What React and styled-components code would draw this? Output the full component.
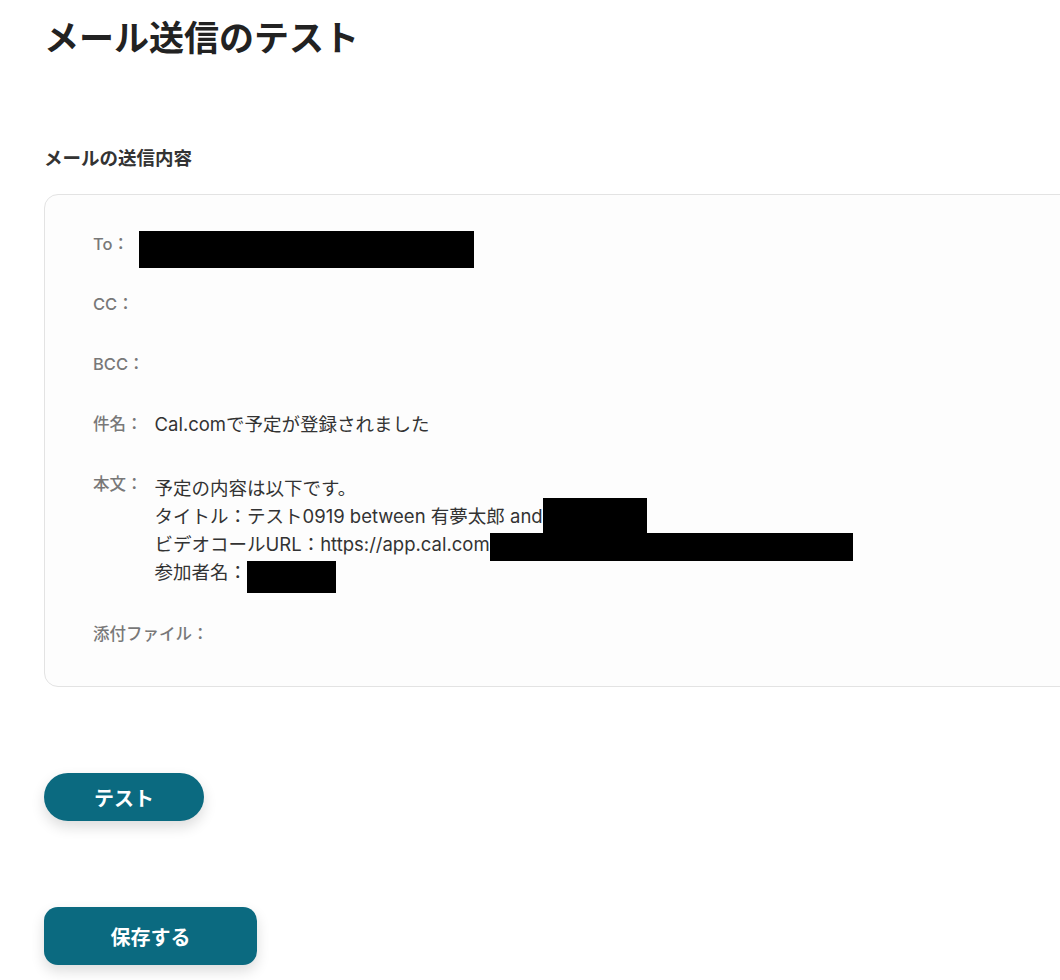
import React from "react";
import styled, { createGlobalStyle } from "styled-components";

const Global = createGlobalStyle`
  html, body { margin: 0; padding: 0; background: #ffffff; overflow-x: hidden; }
  body { font-family: "Noto Sans CJK JP", "Noto Sans", sans-serif; color: #333; }
`;

const Page = styled.div`
  padding: 12px 0 40px 44px;
  display: flex;
  flex-direction: column;
`;

const Title = styled.h1`
  margin: 0;
  font-size: 35px;
  line-height: 48px;
  font-weight: 700;
  color: #222;
`;

const SectionLabel = styled.h2`
  margin: 84px 0 24px;
  font-size: 18.5px;
  line-height: 26px;
  font-weight: 700;
  color: #333;
`;

const Card = styled.div`
  margin-right: -60px;
  border: 1px solid #e3e3e3;
  border-radius: 14px;
  background: #fdfdfd;
  padding: 37px 48px 40px 48px;
  display: flex;
  flex-direction: column;
  gap: 36px;
`;

const Row = styled.div`
  display: flex;
  align-items: flex-start;
  gap: ${(p) => p.$gap || 12}px;
`;

const Label = styled.span`
  font-family: "Inter", "Noto Sans CJK JP", sans-serif;
  font-size: 16.5px;
  line-height: 24px;
  font-weight: 500;
  color: #787878;
  white-space: nowrap;
`;

const Value = styled.div`
  font-family: "Inter", "Noto Sans CJK JP", sans-serif;
  font-size: 18.5px;
  line-height: ${(p) => p.$lh || 24}px;
  font-weight: 400;
  color: #333;
  margin-top: ${(p) => p.$mt || 0}px;
`;

const Line = styled.div`
  white-space: nowrap;
`;

const Redact = styled.span`
  display: inline-block;
  vertical-align: top;
  background: #000;
  width: ${(p) => p.$w}px;
  height: ${(p) => p.$h}px;
  margin-top: ${(p) => p.$top}px;
  margin-bottom: ${(p) => p.$bottom}px;
`;

const Button = styled.button`
  display: flex;
  align-items: center;
  justify-content: center;
  border: none;
  background: #0b6a80;
  color: #fff;
  font-family: "Noto Sans CJK JP", "Noto Sans", sans-serif;
  font-weight: 700;
  font-size: 20px;
  width: ${(p) => p.$w}px;
  height: ${(p) => p.$h}px;
  border-radius: ${(p) => p.$r}px;
  margin-top: ${(p) => p.$mt}px;
  box-shadow: 0 6px 14px rgba(0, 0, 0, 0.14);
  cursor: pointer;
  padding: 0;
`;

export default function App() {
  return (
    <>
      <Global />
      <Page>
        <Title>メール送信のテスト</Title>
        <SectionLabel>メールの送信内容</SectionLabel>
        <Card>
          <Row $gap={10}>
            <Label>To：</Label>
            <Value>
              <Redact $w={335} $h={37} $top={-1} $bottom={-12} />
            </Value>
          </Row>
          <Row>
            <Label>CC：</Label>
          </Row>
          <Row>
            <Label>BCC：</Label>
          </Row>
          <Row>
            <Label>件名：</Label>
            <Value>Cal.comで予定が登録されました</Value>
          </Row>
          <Row>
            <Label>本文：</Label>
            <Value $lh={28} $mt={2}>
              <Line>予定の内容は以下です。</Line>
              <Line>
                タイトル：テスト0919 between 有夢太郎 and
                <Redact $w={104} $h={37} $top={-4} $bottom={-5} />
              </Line>
              <Line>
                ビデオコールURL：https://app.cal.com
                <Redact $w={363} $h={28} $top={3} $bottom={-3} />
              </Line>
              <Line>
                参加者名：
                <Redact $w={89} $h={32} $top={3} $bottom={-7} />
              </Line>
            </Value>
          </Row>
          <Row>
            <Label>添付ファイル：</Label>
          </Row>
        </Card>
        <Button $w={160} $h={48} $r={24} $mt={86}>テスト</Button>
        <Button $w={213} $h={58} $r={14} $mt={86}>保存する</Button>
      </Page>
    </>
  );
}
